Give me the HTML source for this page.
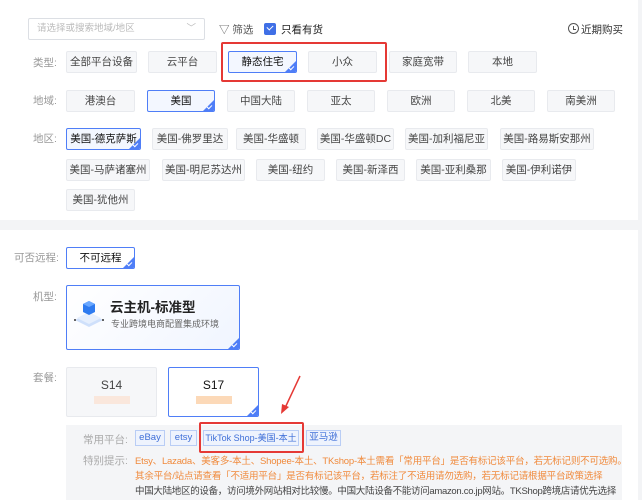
<!DOCTYPE html>
<html><head><meta charset="utf-8"><style>
*{box-sizing:border-box;margin:0;padding:0}
body{width:642px;height:500px;overflow:hidden;background:#f3f4f6;font-family:"Liberation Sans","Noto Sans CJK SC",sans-serif;font-size:11px;color:#333;position:relative}
.p{position:absolute;background:#fff}
.a{position:absolute}
.b{position:absolute;height:22px;background:#f6f7f9;border:1px solid #e8eaee;border-radius:2px;text-align:center;line-height:20px;font-size:10.5px;color:#444;white-space:nowrap;overflow:hidden}
.s{background:#f3f7ff;border:1px solid #4f7ef7;color:#111}
.s::after{content:"";position:absolute;right:0;bottom:0;border-style:solid;border-width:0 0 11px 11px;border-color:transparent transparent #4f7ef7 transparent}
.s::before{content:"";position:absolute;right:2px;bottom:3px;width:4px;height:2px;border-left:1px solid #fff;border-bottom:1px solid #fff;transform:rotate(-45deg);z-index:2}
.l{position:absolute;color:#999;font-size:10.5px}
.t{position:absolute;height:16px;border:1px solid #b9cdf5;background:#eef3fd;color:#3f6fd8;font-size:9.5px;line-height:14px;text-align:center;white-space:nowrap;overflow:hidden}
.red{position:absolute;border:2px solid #e53935;border-radius:2px}
.n{position:absolute;font-size:9.5px;white-space:nowrap;left:135px}
</style></head><body>
<div class="p" style="left:0;top:0;width:638px;height:220px"></div>
<div class="p" style="left:0;top:230px;width:638px;height:270px"></div>

<div class="a" style="left:28px;top:18px;width:177px;height:22px;border:1px solid #dcdfe4;border-radius:2px;background:#fff;color:#bbb;font-size:9.5px;line-height:20px;padding-left:8px">请选择或搜索地域/地区<span style="position:absolute;right:8px;color:#bbb">﹀</span></div>
<div class="a" style="left:219px;top:22px;color:#555;font-size:10.5px">▽ 筛选</div>
<div class="a" style="left:264px;top:23px;width:12px;height:12px;background:#3f6fe6;border-radius:2px"></div>
<div class="a" style="left:267px;top:25px;width:6px;height:4px;border-left:1.5px solid #fff;border-bottom:1.5px solid #fff;transform:rotate(-45deg)"></div>
<div class="a" style="left:281px;top:22px;color:#222;font-size:10.5px">只看有货</div>
<div class="a" style="left:568px;top:23px;width:11px;height:11px;border:1px solid #555;border-radius:50%"></div>
<div class="a" style="left:573px;top:26px;width:3px;height:4px;border-left:1px solid #555;border-bottom:1px solid #555"></div>
<div class="a" style="left:581px;top:22px;color:#333;font-size:10.5px">近期购买</div>

<div class="l" style="left:33px;top:55px">类型:</div>
<div class="b" style="left:66px;top:51px;width:71px">全部平台设备</div>
<div class="b" style="left:148px;top:51px;width:69px">云平台</div>
<div class="b s" style="left:228px;top:51px;width:69px">静态住宅</div>
<div class="b" style="left:308px;top:51px;width:69px">小众</div>
<div class="b" style="left:389px;top:51px;width:68px">家庭宽带</div>
<div class="b" style="left:468px;top:51px;width:69px">本地</div>
<div class="red" style="left:221px;top:42px;width:166px;height:40px"></div>

<div class="l" style="left:33px;top:93px">地域:</div>
<div class="b" style="left:66px;top:90px;width:69px">港澳台</div>
<div class="b s" style="left:147px;top:90px;width:68px">美国</div>
<div class="b" style="left:227px;top:90px;width:68px">中国大陆</div>
<div class="b" style="left:307px;top:90px;width:68px">亚太</div>
<div class="b" style="left:387px;top:90px;width:68px">欧洲</div>
<div class="b" style="left:467px;top:90px;width:68px">北美</div>
<div class="b" style="left:547px;top:90px;width:68px">南美洲</div>

<div class="l" style="left:33px;top:131px">地区:</div>
<div class="b s" style="left:66px;top:128px;width:75px">美国-德克萨斯</div>
<div class="b" style="left:152px;top:128px;width:76px">美国-佛罗里达</div>
<div class="b" style="left:236px;top:128px;width:70px">美国-华盛顿</div>
<div class="b" style="left:317px;top:128px;width:77px">美国-华盛顿DC</div>
<div class="b" style="left:405px;top:128px;width:83px">美国-加利福尼亚</div>
<div class="b" style="left:500px;top:128px;width:94px">美国-路易斯安那州</div>
<div class="b" style="left:66px;top:159px;width:84px">美国-马萨诸塞州</div>
<div class="b" style="left:162px;top:159px;width:83px">美国-明尼苏达州</div>
<div class="b" style="left:256px;top:159px;width:69px">美国-纽约</div>
<div class="b" style="left:336px;top:159px;width:69px">美国-新泽西</div>
<div class="b" style="left:416px;top:159px;width:75px">美国-亚利桑那</div>
<div class="b" style="left:502px;top:159px;width:74px">美国-伊利诺伊</div>
<div class="b" style="left:66px;top:189px;width:69px">美国-犹他州</div>

<div class="l" style="left:14px;top:250px">可否远程:</div>
<div class="b s" style="left:66px;top:247px;width:69px;background:#fff">不可远程</div>

<div class="l" style="left:33px;top:289px">机型:</div>
<div class="b s" style="left:66px;top:285px;width:174px;height:65px;background:linear-gradient(135deg,#fff,#f0f5ff);text-align:left"></div>
<svg class="a" style="left:71px;top:296px" width="36" height="36" viewBox="0 0 36 36"><path d="M4 24 L18 17 L32 24 L18 31Z" fill="#cfe0fb"/><path d="M6 22 L18 16 L30 22 L18 28Z" fill="#e6effd"/><path d="M12 8 L18 5 L24 8 L24 16 L18 19 L12 16Z" fill="#2e7bf0"/><path d="M12 8 L18 11 L24 8 L18 5Z" fill="#6aa8ff"/><circle cx="4" cy="24" r="1" fill="#333"/><circle cx="32" cy="24" r="1" fill="#333"/></svg>
<div class="a" style="left:110px;top:296px;font-size:13.5px;color:#222;font-weight:bold">云主机-标准型</div>
<div class="a" style="left:111px;top:317px;font-size:9px;color:#666">专业跨境电商配置集成环境</div>

<div class="l" style="left:33px;top:370px">套餐:</div>
<div class="b" style="left:66px;top:367px;width:91px;height:50px;line-height:normal;padding-top:10px;font-size:12px">S14<div style="margin:4px auto 0;width:36px;height:8px;background:#fbe2d4;opacity:.8"></div></div>
<div class="b s" style="left:168px;top:367px;width:91px;height:50px;line-height:normal;padding-top:10px;font-size:12px;background:#fff">S17<div style="margin:4px auto 0;width:36px;height:8px;background:#fcd9b8"></div></div>
<svg class="a" style="left:276px;top:374px" width="30" height="42"><path d="M24 2 L9 34" stroke="#e53935" stroke-width="1.5"/><path d="M5 40 L6 30 L13 33Z" fill="#e53935"/></svg>

<div class="a" style="left:66px;top:425px;width:556px;height:75px;background:#f4f5f7"></div>
<div class="l" style="left:83px;top:432px;color:#aaa">常用平台:</div>
<div class="t" style="left:135px;top:430px;width:30px">eBay</div>
<div class="t" style="left:170px;top:430px;width:27px">etsy</div>
<div class="t" style="left:203px;top:430px;width:96px;font-size:9px">TikTok Shop-美国-本土</div>
<div class="t" style="left:306px;top:430px;width:35px">亚马逊</div>
<div class="red" style="left:199px;top:422px;width:105px;height:31px"></div>
<div class="l" style="left:83px;top:453px;color:#aaa">特别提示:</div>
<div class="n" style="top:453px;color:#f08a3c;letter-spacing:-0.2px">Etsy、Lazada、美客多-本土、Shopee-本土、TKshop-本土需看「常用平台」是否有标记该平台，若无标记则不可选购。</div>
<div class="n" style="top:468px;color:#f08a3c;letter-spacing:-0.2px">其余平台/站点请查看「不适用平台」是否有标记该平台，若标注了不适用请勿选购，若无标记请根据平台政策选择</div>
<div class="n" style="top:483px;color:#444;letter-spacing:-0.3px">中国大陆地区的设备，访问境外网站相对比较慢。中国大陆设备不能访问amazon.co.jp网站。TKShop跨境店请优先选择</div>
</body></html>
